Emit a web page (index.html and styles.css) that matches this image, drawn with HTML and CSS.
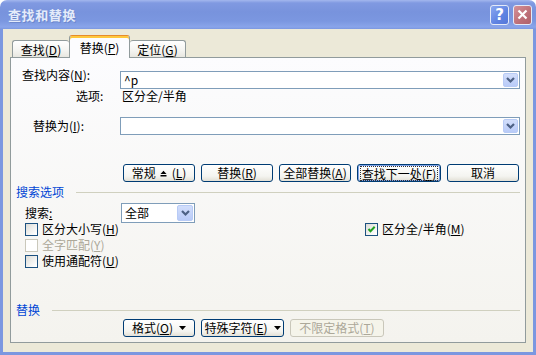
FILE: index.html
```html
<!DOCTYPE html>
<html lang="zh-CN">
<head>
    <meta charset="UTF-8">
    <title>查找和替换</title>
    <link rel="stylesheet" href="styles.css">
</head>
<body>
    <div class="window">
        <div class="titlebar">
            <span class="title">查找和替换</span>
            <div class="caption-buttons">
                <span class="cap-btn help">?</span>
                <span class="cap-btn close">
                    <svg width="11" height="11" viewBox="0 0 11 11"><path d="M1.5 1.5 L9.5 9.5 M9.5 1.5 L1.5 9.5" stroke="#fff" stroke-width="2.2" fill="none"/></svg>
                </span>
            </div>
        </div>

        <div class="client">
            <div class="tabs">
                <div class="tab first">查找(<u>D</u>)</div>
                <div class="tab active">替换(<u>P</u>)</div>
                <div class="tab last">定位(<u>G</u>)</div>
            </div>

            <div class="panel">
                <!-- 查找内容 -->
                <div class="row row-find">
                    <label class="field-label find-label">查找内容(<u>N</u>):</label>
                    <div class="combo">
                        <span class="combo-value">^p</span>
                        <span class="drop"><svg width="11" height="8" viewBox="0 0 11 8"><path d="M2 2 L5.5 5.5 L9 2" stroke="#4D6185" stroke-width="2.2" fill="none"/></svg></span>
                    </div>
                </div>
                <div class="row row-options">
                    <span class="field-label options-label">选项:</span>
                    <span class="options-value">区分全/半角</span>
                </div>

                <!-- 替换为 -->
                <div class="row row-replace">
                    <label class="field-label replace-label">替换为(<u>I</u>):</label>
                    <div class="combo">
                        <span class="combo-value"></span>
                        <span class="drop"><svg width="11" height="8" viewBox="0 0 11 8"><path d="M2 2 L5.5 5.5 L9 2" stroke="#4D6185" stroke-width="2.2" fill="none"/></svg></span>
                    </div>
                </div>

                <!-- 主按钮 -->
                <div class="row button-row">
                    <button class="btn w72">常规<svg class="less" width="7" height="7" viewBox="0 0 7 7"><path d="M0.5 4 L3.5 0.8 L6.5 4 Z" fill="#000"/><rect x="0.5" y="5" width="6" height="1.5" fill="#000"/></svg>(<u>L</u>)</button>
                    <button class="btn w72">替换(<u>R</u>)</button>
                    <button class="btn w72">全部替换(<u>A</u>)</button>
                    <button class="btn default w84"><span class="focus">查找下一处(<u>F</u>)</span></button>
                    <button class="btn w72">取消</button>
                </div>

                <!-- 搜索选项 -->
                <div class="row group-title search-title">
                    <span class="group-label">搜索选项</span>
                    <span class="group-line"></span>
                </div>
                <div class="row row-search">
                    <span class="search-label">搜索<u>:</u></span>
                    <div class="select">
                        <span class="combo-value">全部</span>
                        <span class="drop tall"><svg width="11" height="8" viewBox="0 0 11 8"><path d="M2 2 L5.5 5.5 L9 2" stroke="#4D6185" stroke-width="2.2" fill="none"/></svg></span>
                    </div>
                </div>

                <div class="checks">
                    <div class="row check-row">
                        <span class="check-item left-col"><span class="box"></span>区分大小写(<u>H</u>)</span>
                        <span class="check-item"><span class="box checked"><svg width="11" height="11" viewBox="0 0 11 11"><path d="M2.5 5 L4.5 7.2 L8.7 2.8" stroke="#21A121" stroke-width="2" fill="none"/></svg></span>区分全/半角(<u>M</u>)</span>
                    </div>
                    <div class="row check-row">
                        <span class="check-item disabled"><span class="box"></span>全字匹配(<u>Y</u>)</span>
                    </div>
                    <div class="row check-row">
                        <span class="check-item"><span class="box"></span>使用通配符(<u>U</u>)</span>
                    </div>
                </div>

                <!-- 替换 -->
                <div class="row group-title replace-title">
                    <span class="group-label">替换</span>
                    <span class="group-line"></span>
                </div>
                <div class="row button-row bottom-buttons">
                    <button class="btn w72">格式(<u>O</u>)<svg class="arrow" width="7" height="4" viewBox="0 0 7 4"><path d="M0 0 L7 0 L3.5 4 Z" fill="#000"/></svg></button>
                    <button class="btn w83">特殊字符(<u>E</u>)<svg class="arrow" width="7" height="4" viewBox="0 0 7 4"><path d="M0 0 L7 0 L3.5 4 Z" fill="#000"/></svg></button>
                    <button class="btn w94" disabled>不限定格式(<u>T</u>)</button>
                </div>
            </div>
        </div>
    </div>
</body>
</html>
```

FILE: styles.css
```css
/* === BASE === */
* {
    box-sizing: border-box;
}

body {
    margin: 0;
    width: 536px;
    height: 355px;
    overflow: hidden;
    background: #fff;
    font-family: "Noto Sans CJK SC", sans-serif;
    font-size: 12px;
    line-height: 12px;
    color: #000;
}

u {
    text-decoration: underline;
    text-underline-offset: 1px;
}

/* === WINDOW FRAME === */
.window {
    width: 536px;
    height: 355px;
    display: flex;
    flex-direction: column;
}

.titlebar {
    height: 29px;
    flex: none;
    display: flex;
    align-items: center;
    padding: 0 4px 0 8px;
    border-radius: 7px 7px 0 0;
    background: linear-gradient(#A3B7EE 0, #8099E1 3px, #7893DD 12px, #7B97E0 21px, #8AA5EA 27px, #7B97E0 29px);
    color: #E4EBFA;
}

.title {
    flex: 1;
    font-size: 13px;
    font-weight: bold;
    letter-spacing: 0.6px;
    line-height: 14px;
    text-shadow: 1px 1px 0 #6C87CC;
}

.caption-buttons {
    display: flex;
    gap: 4px;
}

.cap-btn {
    width: 19px;
    height: 20px;
    border: 1px solid #E4EAF8;
    border-radius: 3px;
    display: flex;
    align-items: center;
    justify-content: center;
    color: #fff;
}

.cap-btn.help {
    background: linear-gradient(135deg, #8AA8F0, #5F83E2 60%, #5577D8);
    font-family: "DejaVu Sans", sans-serif;
    font-weight: bold;
    font-size: 15px;
}

.cap-btn.close {
    background: linear-gradient(135deg, #D59198, #BD6F77 60%, #B0626B);
}

.client {
    flex: 1;
    display: flex;
    flex-direction: column;
    background: #ECE9D8;
    border: 3px solid #7B97E0;
    border-top: 0;
}

/* === TABS === */
.tabs {
    height: 22px;
    margin-top: 6px;
    padding-left: 9px;
    display: flex;
    align-items: flex-end;
    position: relative;
    z-index: 1;
}

.tab {
    height: 17px;
    display: flex;
    align-items: center;
    justify-content: center;
    border: 1px solid #919B9C;
    border-bottom: 0;
    border-radius: 3px 3px 0 0;
    background: linear-gradient(#FFFFFF, #F4F4F0 60%, #E8E7E0);
    padding-top: 1px;
}

.tab.first { width: 57px; border-right: 0; }
.tab.last { width: 56px; border-left: 0; }

.tab.active {
    width: 61px;
    height: 23px;
    margin-bottom: -1px;
    border-top: 1px solid #E68B2C;
    box-shadow: inset 0 2px 0 #FFC83C;
    background: #FCFCFE;
    padding-top: 2px;
}

/* === PANEL === */
.panel {
    height: 286px;
    margin: 0 7px;
    border: 1px solid #919B9C;
    background: linear-gradient(#FCFCFE, #F4F3EE);
    display: flex;
    flex-direction: column;
}

.row {
    display: flex;
    align-items: center;
    flex: none;
}

.field-label {
    width: 109px;
    flex: none;
    padding-left: 11px;
}

.row-find {
    margin-top: 13px;
    height: 18px;
}

.find-label {
    align-self: flex-start;
    margin-top: -2px;
}

.combo,
.select {
    width: 400px;
    height: 18px;
    display: flex;
    align-items: center;
    padding-left: 3px;
    border: 1px solid #7F9DB9;
    background: #fff;
}

.combo-value {
    flex: 1;
}

.drop {
    width: 15px;
    height: 14px;
    margin-right: 1px;
    display: flex;
    align-items: center;
    justify-content: center;
    border: 1px solid #B8CBF6;
    border-radius: 2px;
    background: linear-gradient(#D2DEFB, #B9CBF8);
}

.drop.tall {
    width: 16px;
    height: 16px;
}

.row-options {
    margin-top: 1px;
    height: 12px;
}

.options-label {
    padding-left: 65px;
}

.options-value {
    margin-left: 2px;
}

.row-replace {
    margin-top: 15px;
    height: 18px;
}

.replace-label {
    padding-left: 22px;
}

/* === BUTTONS === */
.button-row {
    margin-top: 29px;
    height: 18px;
    padding-left: 112px;
    gap: 6px;
}

.btn {
    height: 18px;
    padding: 0;
    display: flex;
    align-items: center;
    justify-content: center;
    font: inherit;
    color: #000;
    border: 1px solid #003C74;
    border-radius: 3px;
    background: linear-gradient(#FFFFFF, #F4F4F0 70%, #E3E0D6);
}

.w72 { width: 72px; }
.w83 { width: 83px; }
.w84 { width: 84px; }
.w94 { width: 94px; }

.btn.default {
    box-shadow: inset 0 0 0 1px #7FA2E8;
}

.btn .focus {
    outline: 1px dotted #333;
    outline-offset: 0;
    padding: 1px 1px 0;
}

.less {
    margin: 0 5px 0 4px;
}

.arrow {
    margin-left: 6px;
}

.btn:disabled {
    color: #ACA899;
    border-color: #C9C7BA;
    background: #F5F4EA;
}

/* === GROUPS === */
.group-title {
    height: 12px;
    padding: 0 5px;
}

.group-label {
    color: #0046D5;
}

.group-line {
    flex: 1;
    height: 1px;
    margin-left: 12px;
    background: #D0D0BF;
}

.search-title {
    margin-top: 4px;
}

.row-search {
    margin-top: 5px;
    height: 20px;
}

.search-label {
    width: 110px;
    padding-left: 14px;
}

.select {
    width: 74px;
    height: 20px;
}

.checks {
    margin-top: -2px;
}

.check-row {
    height: 16px;
    padding-left: 14px;
}

.check-item {
    display: flex;
    align-items: center;
}

.left-col {
    width: 340px;
}

.box {
    width: 13px;
    height: 13px;
    margin-right: 4px;
    border: 1px solid #1C5180;
    background: linear-gradient(135deg, #DCDCD7, #FFFFFF 90%);
    display: flex;
    align-items: center;
    justify-content: center;
}

.check-item.disabled {
    color: #ACA899;
}

.check-item.disabled .box {
    border-color: #CAC8BB;
    background: #FFFFFF;
}

.replace-title {
    margin-top: 35px;
}

.bottom-buttons {
    margin-top: 3px;
}
```
